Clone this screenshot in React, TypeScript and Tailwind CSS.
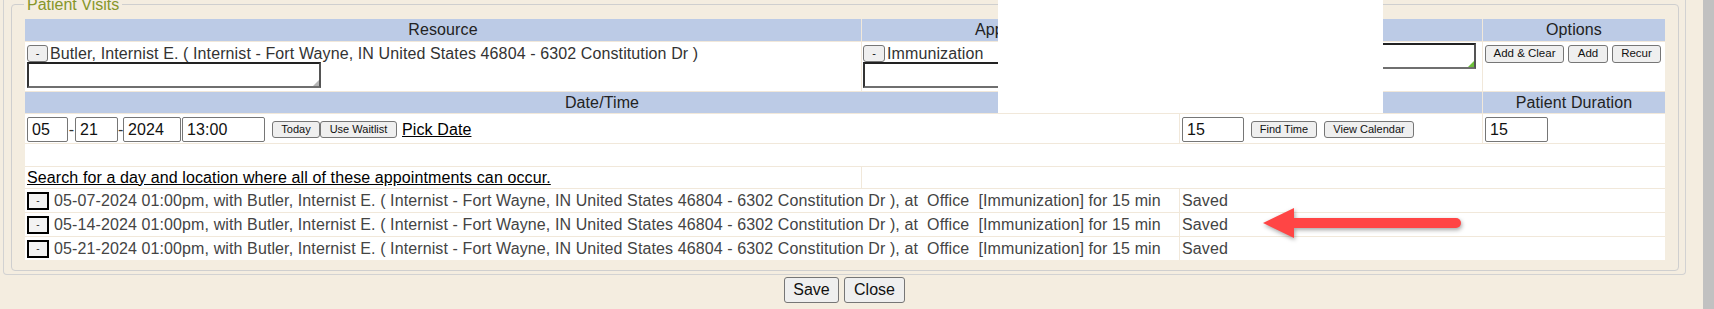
import React from "react";

const dates = ["05-07-2024", "05-14-2024", "05-21-2024"];

function Btn({ className, children }: { className: string; children: React.ReactNode }) {
  return (
    <button
      type="button"
      className={
        "flex shrink-0 items-center justify-center border border-[#767676] rounded-[3px] bg-[#efefef] text-[#111] leading-none whitespace-nowrap tracking-normal " +
        className
      }
    >
      {children}
    </button>
  );
}

function Field({ className, value }: { className: string; value: string }) {
  return (
    <input
      readOnly
      value={value}
      className={
        "h-[25px] shrink-0 border border-[#767676] rounded-[2px] bg-white pl-[4px] text-[16px] text-[#111] outline-none " +
        className
      }
    />
  );
}

function Area({ className, handle }: { className: string; handle: string }) {
  return (
    <div className={"relative " + className}>
      <textarea
        readOnly
        className="block h-full w-full resize-none border-2 border-t-[#222] border-l-[#333] border-r-[#555] border-b-[#6f6f6f] bg-white outline-none"
      />
      <svg className="absolute right-[2px] bottom-[2px]" width="6" height="6" viewBox="0 0 6 6">
        <polygon points="6,0 6,6 0,6" fill={handle} />
      </svg>
    </div>
  );
}

function Head({ className, children }: { className: string; children?: React.ReactNode }) {
  return (
    <div className={"flex items-center justify-center bg-[#bccbe6] text-[16px] leading-none text-[#222] " + className}>
      {children}
    </div>
  );
}

export default function App() {
  return (
    <div className="relative flex h-[309px] w-[1714px] overflow-hidden bg-[#f4ede0] font-['Liberation_Sans',Arial,Helvetica,sans-serif]">
      <div className="flex w-[1703px] flex-col">
        <div className="-mt-[5px] ml-[3px] w-[1683px] rounded-b-[4px] border-x border-b border-[#d2d2d2] pl-[7px] pr-[6px] pb-[3px]">
          <fieldset className="rounded-[4px] border border-[#cfcfcf] px-[13px] pt-[5px] pb-[10px]">
            <legend className="-ml-[1px] px-[3px] text-[16px] leading-[19px] text-[#86962a]">Patient Visits</legend>
            <div className="grid w-[1640px] grid-cols-[836px_317px_302px_182px] grid-rows-[22px_49px_21px_29px_22px_21px_23px_23px_23px] gap-px bg-[#f1e8da] text-[16px] tracking-[0.11px] text-[#333]">
              {/* header row 1 */}
              <Head className="">Resource</Head>
              <Head className="">Appointment</Head>
              <Head className="">Notes</Head>
              <Head className="">Options</Head>

              {/* row 2 */}
              <div className="flex flex-col bg-white pl-[2px] pt-[3px]">
                <div className="flex items-center">
                  <Btn className="h-[17px] w-[21px] text-[11px]">-</Btn>
                  <span className="ml-[2px] whitespace-nowrap leading-[17px] text-[#333]">
                    Butler, Internist E. ( Internist - Fort Wayne, IN United States 46804 - 6302 Constitution Dr )
                  </span>
                </div>
                <Area className="h-[26px] w-[294px]" handle="#b5b5b5" />
              </div>
              <div className="flex flex-col bg-white pl-[1px] pt-[3px]">
                <div className="flex items-center">
                  <Btn className="h-[17px] w-[22px] text-[11px]">-</Btn>
                  <span className="ml-[2px] whitespace-nowrap leading-[17px] text-[#333]">Immunization</span>
                </div>
                <Area className="h-[26px] w-[294px]" handle="#b5b5b5" />
              </div>
              <div className="bg-white pl-[2px] pt-[1px]">
                <Area className="h-[26px] w-[294px]" handle="#6cbf3a" />
              </div>
              <div className="flex items-start gap-[4px] bg-white pl-[2px] pt-[3px]">
                <Btn className="h-[18px] w-[79px] text-[11.5px]">Add &amp; Clear</Btn>
                <Btn className="h-[18px] w-[40px] text-[11.5px]">Add</Btn>
                <Btn className="h-[18px] w-[49px] text-[11.5px]">Recur</Btn>
              </div>

              {/* header row 2 */}
              <Head className="col-span-2">Date/Time</Head>
              <Head className="">Duration</Head>
              <Head className="">Patient Duration</Head>

              {/* row 4 */}
              <div className="col-span-2 flex items-start bg-white pl-[2px] pt-[3px]">
                <div className="flex h-[25px] items-center">
                  <Field className="w-[41px]" value="05" />
                  <span className="w-[7px] text-center leading-none">-</span>
                  <Field className="w-[43px]" value="21" />
                  <span className="w-[5px] text-center leading-none">-</span>
                  <Field className="w-[58px]" value="2024" />
                  <Field className="ml-[1px] w-[83px]" value="13:00" />
                  <Btn className="ml-[7px] h-[17px] w-[48px] text-[11px]">Today</Btn>
                  <Btn className="h-[17px] w-[77px] text-[11px]">Use Waitlist</Btn>
                  <a className="ml-[5px] text-[16px] leading-none text-black underline">Pick Date</a>
                </div>
              </div>
              <div className="flex items-start bg-white pl-[2px] pt-[3px]">
                <div className="flex h-[25px] items-center">
                  <Field className="w-[62px]" value="15" />
                  <Btn className="ml-[7px] h-[17px] w-[66px] text-[11px]">Find Time</Btn>
                  <Btn className="ml-[7px] h-[17px] w-[90px] text-[11px]">View Calendar</Btn>
                </div>
              </div>
              <div className="bg-white pl-[2px] pt-[3px]">
                <Field className="w-[63px]" value="15" />
              </div>

              {/* row 5 */}
              <div className="col-span-4 bg-white" />

              {/* row 6 */}
              <div className="flex items-center bg-white pl-[2px]">
                <a className="whitespace-nowrap text-[16px] leading-none text-black underline">
                  Search for a day and location where all of these appointments can occur.
                </a>
              </div>
              <div className="col-span-3 bg-white" />

              {/* appointment rows */}
              {dates.map((d) => (
                <React.Fragment key={d}>
                  <div className="col-span-2 flex items-center bg-white pl-[2px]">
                    <button
                      type="button"
                      className="flex h-[18px] w-[22px] shrink-0 items-end justify-center border-2 border-black bg-[#f3f3f3] pb-[2px] text-[10px] leading-none text-[#333]"
                    >
                      -
                    </button>
                    <span className="ml-[5px] whitespace-pre leading-none text-[#444]">
                      {d + " 01:00pm, with Butler, Internist E. ( Internist - Fort Wayne, IN United States 46804 - 6302 Constitution Dr ), at  Office  [Immunization] for 15 min"}
                    </span>
                  </div>
                  <div className="col-span-2 flex items-center bg-white pl-[2px]">
                    <span className="leading-none text-[#444]">Saved</span>
                  </div>
                </React.Fragment>
              ))}
            </div>
          </fieldset>
        </div>
        <div className="mt-[2px] ml-[3px] flex w-[1683px] justify-center gap-[5px]">
          <Btn className="h-[26px] w-[55px] text-[16px]">Save</Btn>
          <Btn className="h-[26px] w-[61px] text-[16px]">Close</Btn>
        </div>
      </div>
      <div className="w-[11px] bg-[#c1c1c1]" />

      {/* redaction box over the content */}
      <div className="absolute left-[998px] top-0 h-[113px] w-[385px] bg-white" />

      {/* annotation arrow */}
      <svg
        className="absolute left-[1255px] top-[200px] drop-shadow-[1px_2px_2px_rgba(0,0,0,0.35)]"
        width="220"
        height="46"
        viewBox="0 0 220 46"
      >
        <line x1="36" y1="23" x2="201" y2="23" stroke="#ff4545" strokeWidth="10" strokeLinecap="round" />
        <polygon points="8,23 39,8 39,38" fill="#ff4545" />
      </svg>
    </div>
  );
}
